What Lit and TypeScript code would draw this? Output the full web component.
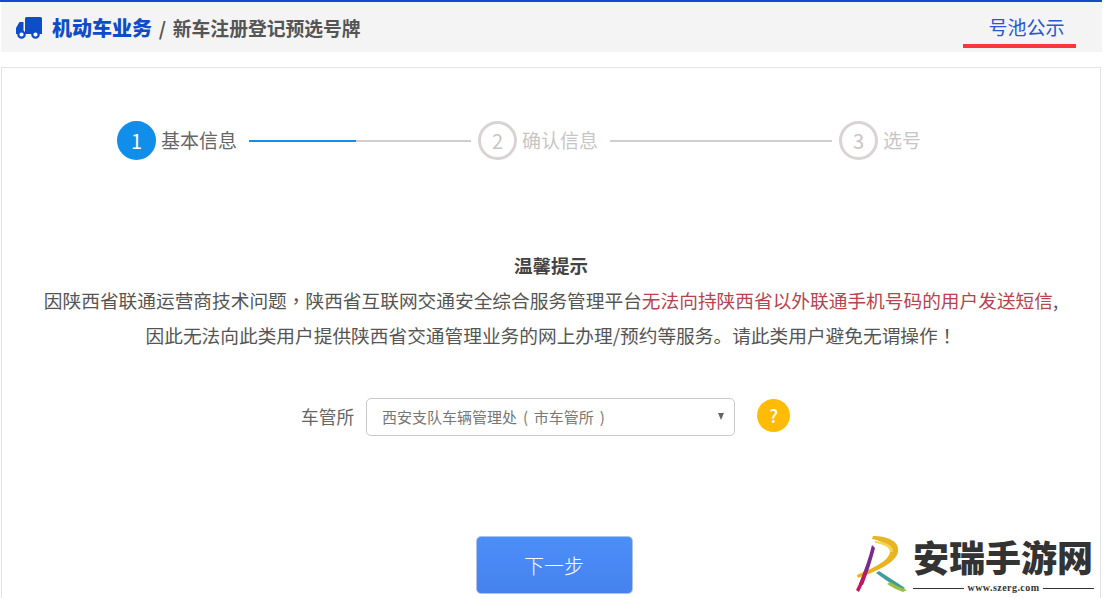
import { LitElement, html, css } from 'lit'
import { customElement } from 'lit/decorators.js'

const steps = [
  { num: 1, label: '基本信息' },
  { num: 2, label: '确认信息' },
  { num: 3, label: '选号' }
]

@customElement('app-root')
export class AppRoot extends LitElement {
  static styles = css`
    * {box-sizing: border-box}

    :host {
      display: block;
      position: relative;
      width: 1104px;
      height: 598px;
      overflow: hidden;
      background: #fff;
      font-family: "Noto Sans CJK SC", "Liberation Sans", sans-serif;
      color: #555;
    }

    .header {
      display: flex;
      justify-content: space-between;
      width: 1102px;
      height: 52px;
      padding: 0 26px 0 15px;
      background: #f4f4f4;
      border-top: 2px solid #0f4cc8;
      box-shadow: inset 1px 0 #fff;
    }

    .crumb {
      display: flex;
      align-items: center;
      height: 50px;
      font-size: 18.8px;
      font-weight: 700;
      white-space: pre;
      word-spacing: 2.5px;
    }

    .crumb svg {
      width: 27px;
      height: 24px;
      margin-right: 10px;
    }

    .crumb b {
      font-size: 20px;
      color: #0f4cc8;
    }

    .tab {
      width: 113px;
      height: 46px;
      padding: 14px 0 0 14px;
      text-align: center;
      font-size: 19px;
      line-height: 22px;
      color: #2b55d8;
      border-bottom: 4px solid #f73838;
    }

    .panel {
      width: 1100px;
      height: 560px;
      margin: 15px 0 0 1px;
      padding-top: 52px;
      border: 1px solid #e3e3e3;
    }

    .steps {
      display: flex;
      align-items: center;
      height: 40px;
      padding-left: 115px;
    }

    .step {
      display: flex;
      align-items: center;
      font-size: 19px;
      color: #c9c5c5;
    }

    .step-label {
      margin-top: -2px;
    }

    .circle {
      display: flex;
      align-items: center;
      justify-content: center;
      width: 39px;
      height: 39px;
      margin-right: 5px;
      border-radius: 50%;
      border: 3px solid #d9d3d3;
      font-size: 20px;
    }

    .step.active {
      color: #666;
    }

    .step.active .circle {
      background: #118eea;
      border-color: #118eea;
      color: #fff;
    }

    .line {
      width: 222px;
      height: 2px;
      margin: 2px 7px 0 12px;
      background: #d3cdcd;
    }

    .line .fill {
      width: 107px;
      height: 2px;
      background: #118eea;
    }

    .notice {
      margin-top: 88px;
      text-align: center;
      font-size: 18.7px;
      line-height: 35px;
      color: #555;
    }

    .notice h4 {
      margin: 0;
      font-size: 18.5px;
      line-height: 34px;
      font-weight: 700;
      color: #444;
    }

    .notice em {
      font-style: normal;
      color: #b8434f;
    }

    .punct {
      font-family: "Noto Sans CJK TC", sans-serif;
    }

    .field {
      display: flex;
      align-items: center;
      height: 38px;
      margin-top: 46px;
      padding-left: 299px;
      font-size: 17.7px;
      color: #666;
    }

    .field-label {
      margin-top: -3px;
    }

    .select-wrap {
      position: relative;
      width: 369px;
      height: 38px;
      margin-left: 12px;
    }

    select {
      appearance: none;
      width: 100%;
      height: 100%;
      padding: 0 0 2px 15px;
      border: 1px solid #c9c9c9;
      border-radius: 5px;
      background: #fff;
      font: inherit;
      font-size: 15px;
      word-spacing: 2.5px;
      color: #777;
    }

    .arrow {
      position: absolute;
      top: 15px;
      right: 11px;
      width: 0;
      height: 0;
      border-left: 3.5px solid transparent;
      border-right: 3.5px solid transparent;
      border-top: 7px solid #666;
    }

    .help {
      display: flex;
      align-items: center;
      justify-content: center;
      width: 33px;
      height: 33px;
      margin: -4px 0 0 22px;
      border-radius: 50%;
      background: #ffbb05;
      color: #fff;
      font-size: 18px;
      font-weight: 500;
    }

    .actions {
      display: flex;
      justify-content: center;
      margin-top: 100px;
      padding-left: 6px;
    }

    button {
      width: 157px;
      height: 58px;
      border: 1px solid #a9c3ee;
      border-radius: 5px;
      background: linear-gradient(#4c8ef9, #4682ee);
      color: #fff;
      font: inherit;
      font-size: 20px;
      font-weight: 300;
    }

    .watermark {
      position: absolute;
      left: 855px;
      top: 535px;
      display: flex;
      width: 245px;
      height: 63px;
      background: #fff;
    }

    .watermark svg {
      flex: none;
      width: 58px;
      height: 60px;
    }

    .brand {
      width: 181px;
      color: #333;
    }

    .brand strong {
      display: block;
      font-size: 36px;
      font-weight: 900;
      line-height: 42px;
      white-space: nowrap;
    }

    .url {
      display: flex;
      align-items: center;
      gap: 4px;
      margin-top: 5px;
      font-family: "Liberation Serif", serif;
      font-size: 10px;
      font-weight: 700;
      letter-spacing: .45px;
      line-height: 12px;
    }

    .url i {
      flex: 1;
      height: 1px;
      background: #333;
    }
  `

  render () {
    return html`
      <div class="header">
        <div class="crumb">
          <svg viewBox="0 0 27 24">
            <path fill="#0f4cc8" d="M10 3.5a1.5 1.5 0 0 1 1.5-1.5h14a1.5 1.5 0 0 1 1.5 1.5V19H10zM8.5 7v12H1v-6l3.5-6z"/>
            <circle cx="6.5" cy="19.5" r="3.2" fill="#fff" stroke="#0f4cc8" stroke-width="2.2"/>
            <circle cx="20.5" cy="19.5" r="3.2" fill="#fff" stroke="#0f4cc8" stroke-width="2.2"/>
          </svg>
          <span><b>机动车业务</b> / 新车注册登记预选号牌</span>
        </div>
        <div class="tab">号池公示</div>
      </div>

      <div class="panel">
        <div class="steps">
          ${steps.map((s, i) => html`
            <div class="step ${i === 0 ? 'active' : ''}">
              <span class="circle">${s.num}</span><span class="step-label">${s.label}</span>
            </div>
            ${i < 2 ? html`<div class="line">${i === 0 ? html`<div class="fill"></div>` : ''}</div>` : ''}
          `)}
        </div>

        <div class="notice">
          <h4>温馨提示</h4>
          <div>因陕西省联通运营商技术问题<span class="punct">，</span>陕西省互联网交通安全综合服务管理平台<em>无法向持陕西省以外联通手机号码的用户发送短信</em>,</div>
          <div>因此无法向此类用户提供陕西省交通管理业务的网上办理/预约等服务。请此类用户避免无谓操作<span class="punct">！</span></div>
        </div>

        <div class="field">
          <span class="field-label">车管所</span>
          <div class="select-wrap">
            <select><option>西安支队车辆管理处 ( 市车管所 )</option></select>
            <span class="arrow"></span>
          </div>
          <span class="help">?</span>
        </div>

        <div class="actions"><button>下一步</button></div>
      </div>

      <div class="watermark">
        <svg viewBox="0 0 58 60">
          <path fill="#e8b420" d="M18 1C32 1 45 6 43 17C41 28 20 37 3 43L2 40C18 33 34 26 35 17C36 10 27 6 17 4z"/>
          <path fill="#f3d35a" d="M20 6C30 7 39 10 38 17L35 17C35 12 28 9 20 8z"/>
          <path fill="#7b2a8c" d="M17 10L20 13C17 25 13 37 8 50L4 49C9 36 14 23 17 10z"/>
          <path fill="#c2185b" d="M9 36L12 37C10 44 7 51 4 57L1 55C4 49 7 43 9 36z"/>
          <path fill="#3f9f98" d="M21 38L24 36C32 41 41 47 50 53L47 55C38 50 29 44 21 38z"/>
          <path fill="#9bbf45" d="M32 49L35 47C40 50 46 53 52 55L48 57C42 55 37 52 32 49z"/>
        </svg>
        <div class="brand">
          <strong>安瑞手游网</strong>
          <div class="url"><i></i>www.szerg.com<i></i></div>
        </div>
      </div>
    `
  }
}
